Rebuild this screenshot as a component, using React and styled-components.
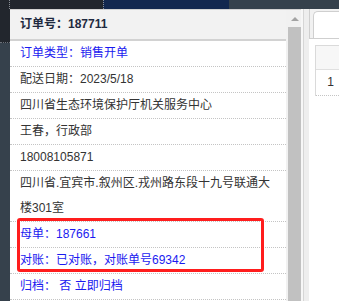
import React from "react";
import styled, { createGlobalStyle } from "styled-components";

const Global = createGlobalStyle`
  html, body { margin: 0; padding: 0; }
  body {
    width: 339px; height: 301px; overflow: hidden;
    background: #36414c;
    font-family: "Liberation Sans", "Noto Sans CJK SC", sans-serif;
  }
`;

const Page = styled.div`
  display: flex;
  flex-direction: column;
  width: 339px;
  height: 301px;
  overflow: hidden;
`;

const TopBar = styled.div`
  display: flex;
  height: 9px;
  flex: none;
`;

const TopSeg = styled.div`
  width: ${(p) => p.$w}px;
  flex: ${(p) => (p.$w ? "none" : "1")};
  background: ${(p) => p.$bg};
  border-left: ${(p) => (p.$dot ? "1px dotted #8a8f96" : "none")};
`;

const Body = styled.div`
  display: flex;
  flex: 1;
  min-height: 0;
`;

const LeftStrip = styled.div`
  width: 10px;
  flex: none;
  display: flex;
  flex-direction: column;
`;

const LeftTop = styled.div`
  height: 33px;
  background: #22262d;
  border-bottom: 1px dotted #6b7078;
`;

const LeftRest = styled.div`
  flex: 1;
  background: #36414c;
`;

const Panel = styled.div`
  display: flex;
  width: 291px;
  flex: none;
  background: #fff;
`;

const Column = styled.div`
  position: relative;
  width: 276px;
  flex: none;
  font-size: 12px;
  color: #333;
`;

const Header = styled.div`
  height: 29px;
  line-height: 29px;
  padding: 0 10px;
  background: #f2f2f2;
  border-top: 1px solid #d2d2d2;
  border-bottom: 2px solid #d2d2d2;
  font-weight: bold;
  color: #1f2a40;
`;

const Row = styled.div`
  line-height: 25px;
  padding: 0 10px;
  border-bottom: 1px dotted #c4c4c4;
  color: ${(p) => (p.$blue ? "#1a1af0" : "#333")};
`;

const Mark = styled.div`
  position: absolute;
  left: 7px;
  top: 209px;
  width: 241px;
  height: 48px;
  border: 3px solid #ff1d1d;
  border-radius: 3px;
  pointer-events: none;
`;

const Scrollbar = styled.div`
  width: 15px;
  flex: none;
  display: flex;
  flex-direction: column;
  background: #f1f1f1;
  border-top: 1px solid #d2d2d2;
`;

const ArrowBox = styled.div`
  height: 17px;
  display: flex;
  align-items: center;
  justify-content: center;
  padding-left: 2px;
`;

const Arrow = styled.div`
  width: 0;
  height: 0;
  border-left: 4px solid transparent;
  border-right: 4px solid transparent;
  border-bottom: 4px solid #a3a3a3;
`;

const Thumb = styled.div`
  flex: 1;
  margin-left: 2px;
  background: #c1c1c1;
`;

const Divider = styled.div`
  width: 8px;
  flex: none;
  background: #eeeeee;
  border-left: 2px solid #f7f7f7;
  box-sizing: border-box;
  position: relative;
  &::before {
    content: "";
    position: absolute;
    left: 0;
    top: 0;
    bottom: 0;
    width: 1px;
    background: #d6d6d6;
  }
`;

const RightArea = styled.div`
  flex: 1;
  display: flex;
  flex-direction: column;
  background: #fff;
`;

const TabBar = styled.div`
  height: 29px;
  display: flex;
  align-items: flex-end;
  background: #f1f1f1;
  border-left: 1px solid #cfcfcf;
  border-bottom: 1px solid #cfcfcf;
  padding-left: 3px;
`;

const Tab = styled.div`
  flex: 1;
  height: 26px;
  background: #fff;
  border: 1px solid #cfcfcf;
  border-bottom: none;
  border-right: none;
  border-radius: 5px 0 0 0;
`;

const Table = styled.div`
  margin: 6px 0 0 6px;
  border-left: 1px solid #dadada;
  border-top: 1px solid #dadada;
  font-size: 12px;
`;

const THead = styled.div`
  height: 23px;
  background: #f7f7f7;
  border-bottom: 1px solid #e0e0e0;
`;

const TRow = styled.div`
  height: 25px;
  line-height: 25px;
  text-align: right;
  padding-right: 5px;
  color: #333;
  border-bottom: 1px dotted #c4c4c4;
`;

export default function App() {
  return (
    <Page>
      <Global />
      <TopBar>
        <TopSeg $w={9} $bg="#22262d" />
        <TopSeg $w={93} $bg="#22262d" $dot />
        <TopSeg $w={125} $bg="#13284f" $dot />
        <TopSeg $bg="#35414c" />
      </TopBar>
      <Body>
        <LeftStrip>
          <LeftTop />
          <LeftRest />
        </LeftStrip>
        <Panel>
          <Column>
            <Header>订单号：187711</Header>
            <Row $blue>订单类型：销售开单</Row>
            <Row>配送日期：2023/5/18</Row>
            <Row>四川省生态环境保护厅机关服务中心</Row>
            <Row>王春，行政部</Row>
            <Row>18008105871</Row>
            <Row>四川省.宜宾市.叙州区.戎州路东段十九号联通大楼301室</Row>
            <Row $blue>母单：187661</Row>
            <Row $blue>对账：已对账，对账单号69342</Row>
            <Row $blue>归档： 否 立即归档</Row>
            <Mark />
          </Column>
          <Scrollbar>
            <ArrowBox>
              <Arrow />
            </ArrowBox>
            <Thumb />
          </Scrollbar>
        </Panel>
        <Divider />
        <RightArea>
          <TabBar>
            <Tab />
          </TabBar>
          <Table>
            <THead />
            <TRow>1</TRow>
          </Table>
        </RightArea>
      </Body>
    </Page>
  );
}
